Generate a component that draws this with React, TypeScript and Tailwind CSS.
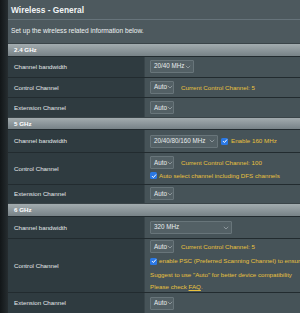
import React from "react";

const Chevron = () => (
  <svg width="6" height="4" viewBox="0 0 6 4" className="shrink-0">
    <path d="M0.8 0.8 L3 3 L5.2 0.8" fill="none" stroke="#9aa5aa" strokeWidth="0.8" />
  </svg>
);

const Select = ({ text, w }: { text: string; w: string }) => (
  <div
    className={`inline-flex items-center h-[13px] border border-[#68757a] bg-[#536065] rounded-[1px] pl-[3px] pr-[2px] text-[6.3px] text-[#e8ecee] whitespace-nowrap ${w}`}
  >
    <span className="flex-1 leading-none">{text}</span>
    <Chevron />
  </div>
);

const Check = () => (
  <div className="w-[7px] h-[7px] rounded-[1.5px] bg-[#2a78e4] flex items-center justify-center shrink-0">
    <svg width="6" height="6" viewBox="0 0 6 6">
      <path d="M1 3.1 L2.4 4.5 L5 1.5" fill="none" stroke="#fff" strokeWidth="1" />
    </svg>
  </div>
);

const Header = ({ label, h }: { label: string; h: string }) => (
  <div
    className={`${h} flex items-center pl-[6px] bg-gradient-to-b from-[#a3acaf] to-[#778287] text-white font-bold text-[6.2px] border-t border-[#3a4448]`}
  >
    {label}
  </div>
);

const Row = ({
  label,
  h,
  children,
}: {
  label: string;
  h: string;
  children: React.ReactNode;
}) => (
  <div className={`${h} flex border-t border-[#222b2f]`}>
    <div className="w-[136px] shrink-0 bg-[#2f3b40] flex items-center pl-[6px] text-[6.2px] text-[#e4e8ea]">
      {label}
    </div>
    <div className="flex-1 bg-[#465358] border-l border-[#39454a] pl-[5px] flex flex-col justify-center text-[6.2px] whitespace-nowrap">
      {children}
    </div>
  </div>
);

const Y = "text-[#e9c23e]";

export default function App() {
  return (
    <div
      className="w-[300px] h-[313px] overflow-hidden flex bg-[#4d595e]"
      style={{ fontFamily: '"Liberation Sans", Arial, sans-serif' }}
    >
      <div className="w-[8px] shrink-0 bg-gradient-to-r from-[#121618] to-[#262d30]" />
      <div className="flex-1 flex flex-col min-w-0">
        <div className="h-[20px] flex items-center pl-[3px] pt-[1px] text-[8.4px] font-bold text-[#f2f4f5] border-b border-[#66737a]">
          Wireless - General
        </div>
        <div className="h-[23px] flex items-center pl-[3px] pb-[1px] text-[6.6px] text-[#eef1f2]">
          Set up the wireless related information below.
        </div>

        <Header label="2.4 GHz" h="h-[13px]" />
        <Row label="Channel bandwidth" h="h-[21px]">
          <Select text="20/40 MHz" w="w-[44px]" />
        </Row>
        <Row label="Control Channel" h="h-[21px]">
          <div className="flex items-center gap-[7px]">
            <Select text="Auto" w="w-[24px]" />
            <span className={Y}>Current Control Channel: 5</span>
          </div>
        </Row>
        <Row label="Extension Channel" h="h-[20px]">
          <Select text="Auto" w="w-[24px]" />
        </Row>

        <Header label="5 GHz" h="h-[12px]" />
        <Row label="Channel bandwidth" h="h-[23px]">
          <div className="flex items-center gap-[3px]">
            <Select text="20/40/80/160 MHz" w="w-[68px]" />
            <Check />
            <span className={Y}>Enable 160 MHz</span>
          </div>
        </Row>
        <Row label="Control Channel" h="h-[32px]">
          <div className="flex items-center gap-[7px]">
            <Select text="Auto" w="w-[24px]" />
            <span className={Y}>Current Control Channel: 100</span>
          </div>
          <div className="flex items-center gap-[2px] mt-[2px]">
            <Check />
            <span className={Y}>Auto select channel including DFS channels</span>
          </div>
        </Row>
        <Row label="Extension Channel" h="h-[19px]">
          <Select text="Auto" w="w-[24px]" />
        </Row>

        <Header label="6 GHz" h="h-[13px]" />
        <Row label="Channel bandwidth" h="h-[23px]">
          <Select text="320 MHz" w="w-[82px]" />
        </Row>
        <Row label="Control Channel" h="h-[54px]">
          <div className="flex items-center gap-[7px]">
            <Select text="Auto" w="w-[24px]" />
            <span className={Y}>Current Control Channel: 5</span>
          </div>
          <div className="flex items-center gap-[2px] mt-[3px]">
            <Check />
            <span className={Y}>enable PSC (Preferred Scanning Channel) to ensure</span>
          </div>
          <div className={`${Y} mt-[4px]`}>
            Suggest to use "Auto" for better device compatibility
          </div>
          <div className={`${Y} mt-[3px]`}>
            Please check <span className="underline">FAQ</span>.
          </div>
        </Row>
        <Row label="Extension Channel" h="h-[21px]">
          <Select text="Auto" w="w-[24px]" />
        </Row>
      </div>
    </div>
  );
}
